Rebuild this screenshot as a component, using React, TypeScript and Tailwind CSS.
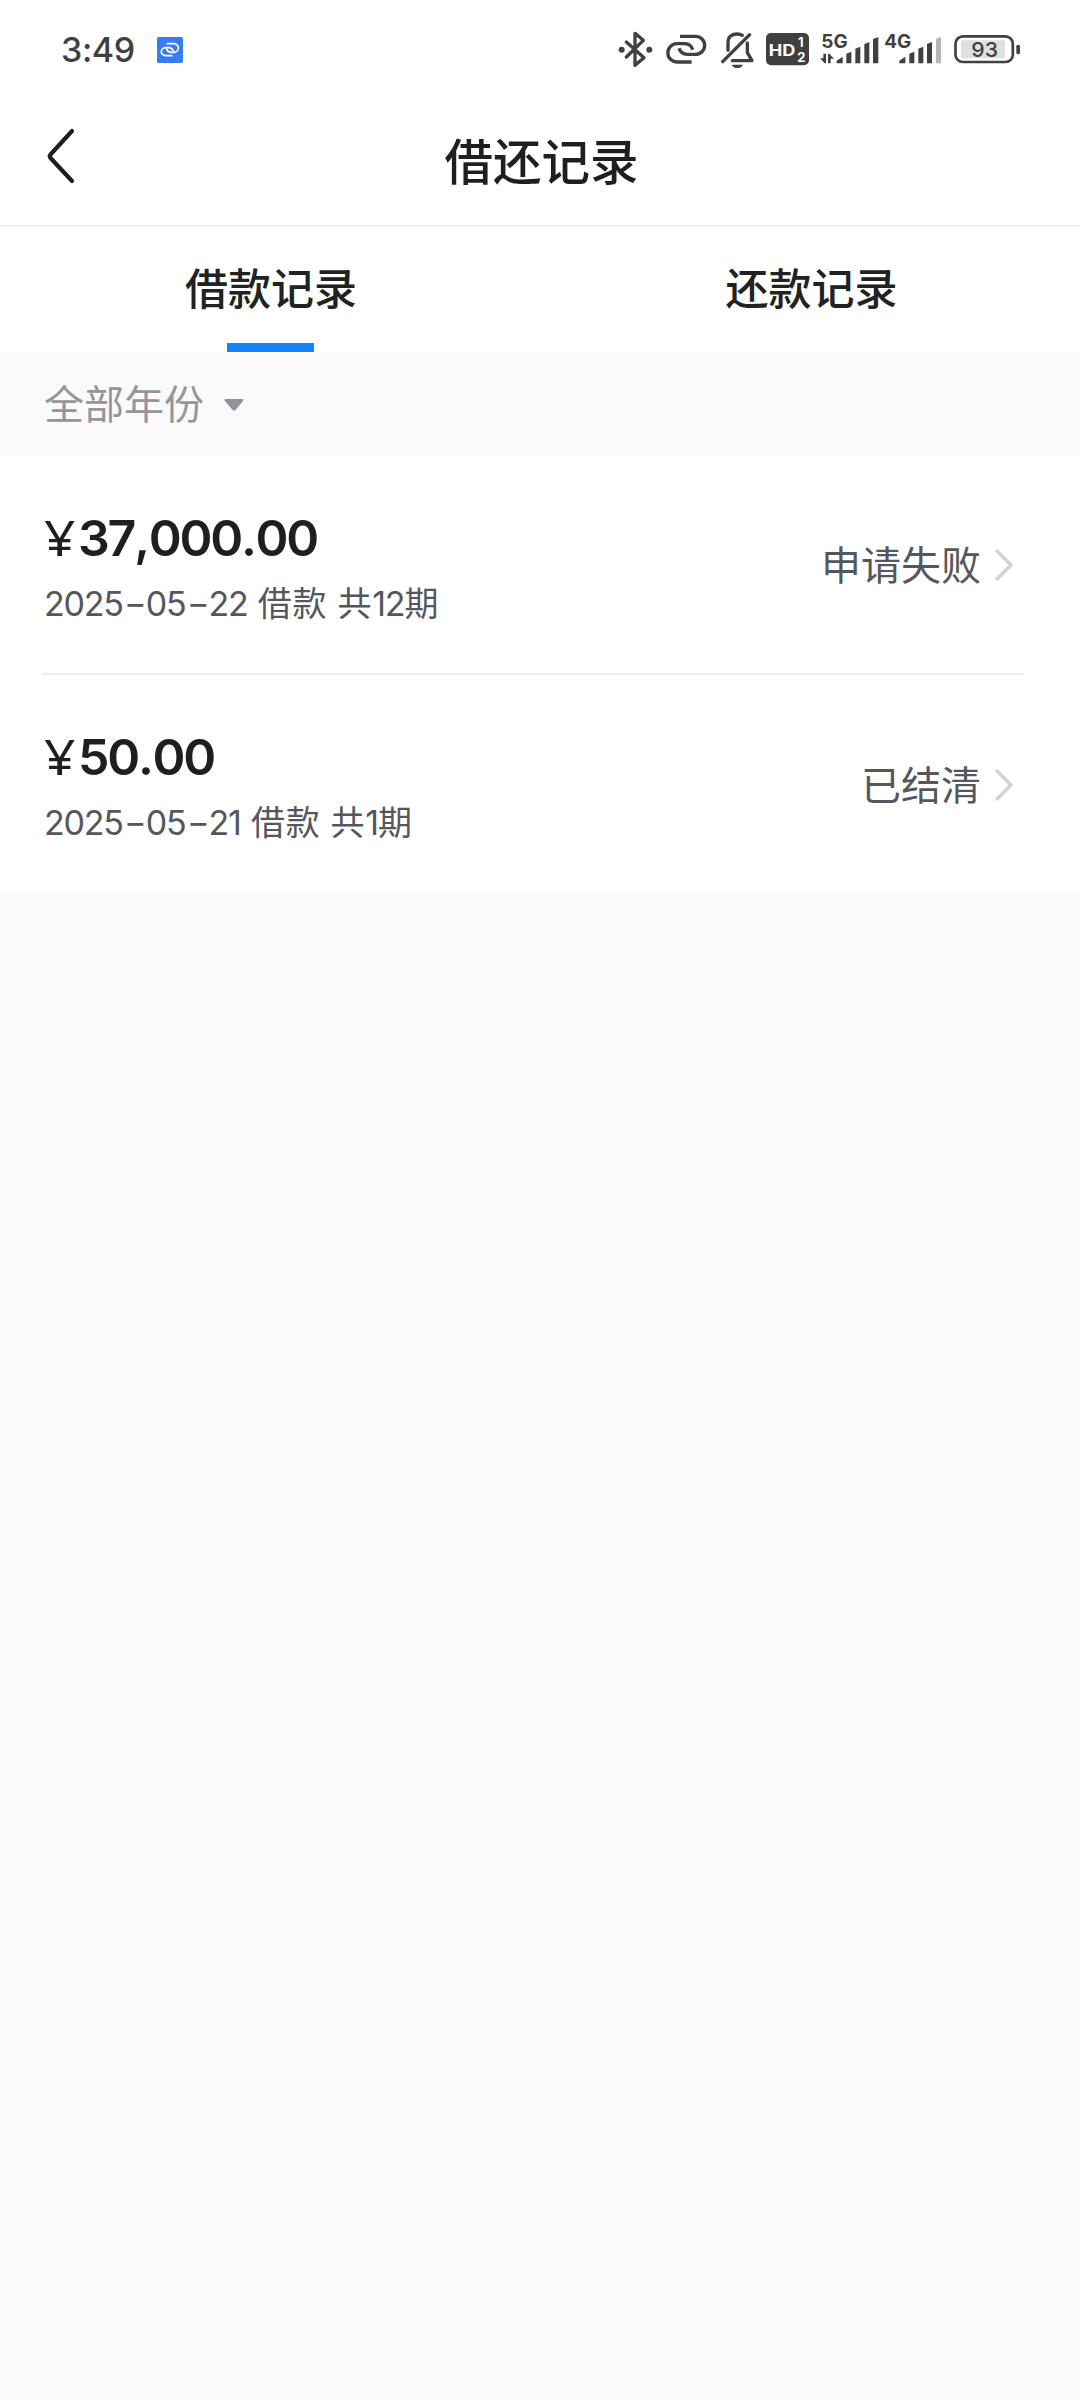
import React from 'react';

const records = [
  { amount: '37,000.00', date: '2025-05-22', type: '借款', periods: '12', status: '申请失败' },
  { amount: '50.00', date: '2025-05-21', type: '借款', periods: '1', status: '已结清' },
];

function StatusBar() {
  return (
    <div className="h-[97px] flex items-start pt-[29px] pl-[61px] pr-[59px] text-[#404040]">
      <div className="h-10 w-24 pt-0.5 flex items-center text-[34px] leading-10 font-medium tracking-[-0.4px]">3:49</div>
      <svg className="mt-2 w-[26px] h-[26px]" viewBox="0 0 78 78" fill="none">
        <rect width="78" height="78" rx="5" fill="#397cf1" />
        <g stroke="#fff" strokeWidth="5" strokeLinecap="round">
          <path d="M44 56H27A13 11 0 0 1 27 32H37Q46 33 48 42" />
          <path d="M31 20H50A13 12 0 0 1 50 46H42Q31 45 29 36" />
        </g>
      </svg>
      <div className="ml-auto flex h-10">
        {/* bluetooth */}
        <svg className="w-9 h-10" viewBox="51 27 108 120" fill="none" stroke="currentColor">
          <path d="M79 66L132 113L105 136V40L130 61L79 111" strokeWidth="10" strokeLinejoin="round" strokeLinecap="round" />
          <circle cx="65" cy="89" r="9" fill="currentColor" stroke="none" />
          <circle cx="148" cy="89" r="9" fill="currentColor" stroke="none" />
        </svg>
        {/* link */}
        <svg className="ml-3 w-[43px] h-10" viewBox="195 27 129 120" fill="none" stroke="currentColor" strokeWidth="10">
          <path d="M275 126H232A27 27 0 0 1 230 71H255Q273 72 278 89" />
          <path d="M240 49H287A27 27 0 0 1 287 103H262Q243 102 237 85" />
        </svg>
        {/* muted bell */}
        <svg className="ml-3 w-[35px] h-10" viewBox="360 27 105 120" fill="none" stroke="currentColor" strokeWidth="10" strokeLinecap="round" strokeLinejoin="round">
          <path d="M449 44L368 125" />
          <path d="M384 91V68C384 50 396 42 411 42Q421 42 427 46" />
          <path d="M442 69V98L456 122H397" />
          <path d="M395 134H429Q424 144 412 144Q400 144 395 134Z" fill="currentColor" stroke="none" />
        </svg>
        {/* HD */}
        <svg className="ml-[11px] w-[43px] h-10" viewBox="498 27 129 120">
          <rect x="498" y="39" width="129" height="97" rx="15" fill="currentColor" />
          <g fill="#fff" fontWeight="700">
            <text x="506" y="109" fontSize="48" textLength="80" lengthAdjust="spacingAndGlyphs">HD</text>
            <text x="594" y="82" fontSize="39">1</text>
            <text x="592" y="126" fontSize="39">2</text>
          </g>
        </svg>
        {/* 5G signal */}
        <svg className="ml-[9px] w-[62px] h-10" viewBox="24 27 186 120" fill="currentColor">
          <text x="34" y="83" fontSize="55" fontWeight="700" textLength="79" lengthAdjust="spacingAndGlyphs">5G</text>
          <path d="M40 101H48V130H44L30 115H40ZM54 130V101H58L72 116H62V130Z" />
          <path d="M80 130V122L98 110V130ZM109 130V101L124 95V130ZM136 130V86L151 80V130ZM163 130V72L178 66V130ZM189 130V57L205 51V130Z" />
        </svg>
        {/* 4G signal */}
        <svg className="ml-1 w-[58px] h-10" viewBox="222 27 174 120" fill="currentColor">
          <text x="223" y="83" fontSize="55" fontWeight="700" textLength="81" lengthAdjust="spacingAndGlyphs">4G</text>
          <path d="M268 130V122L286 110V130ZM298 130V101L313 95V130ZM325 130V86L340 80V130ZM351 130V72L366 66V130Z" />
          <path d="M378 130V57L393 51V130Z" fill="#b5b5b5" />
        </svg>
        {/* battery */}
        <svg className="ml-3 w-[67px] h-10" viewBox="432 27 201 120">
          <rect x="436.500" y="49" width="172" height="77" rx="22" fill="none" stroke="currentColor" strokeWidth="8" />
          <rect x="453" y="61" width="132" height="54" rx="4" fill="#dfdfdf" />
          <text x="484" y="112" fontSize="62" fontWeight="500" textLength="80" lengthAdjust="spacingAndGlyphs" fill="currentColor">93</text>
          <rect x="619" y="74" width="11" height="29" rx="5" fill="currentColor" />
        </svg>
      </div>
    </div>
  );
}

// Separators sit a little wider than the digits
function Amount({ value }: { value: string }) {
  return (
    <span className="font-semibold tracking-[-2.200px]">
      {value.split(/([.,])/).map((part, i) =>
        part === '.' || part === ',' ? (
          <span key={i} className="tracking-[-1.500px]">{part}</span>
        ) : (
          <span key={i}>{part}</span>
        )
      )}
    </span>
  );
}

// Long dashes between year, month and day
function DateText({ value }: { value: string }) {
  return (
    <>
      {value.split(/(-)/).map((part, i) =>
        part === '-' ? (
          <span key={i} className="inline-block w-[23px] text-center scale-x-[1.45]">-</span>
        ) : (
          <span key={i}>{part}</span>
        )
      )}
    </>
  );
}

export default function App() {
  return (
    <div className="w-[1080px] h-[2400px] bg-[#fafafa] overflow-hidden font-['Inter','Noto_Sans_CJK_SC',sans-serif]">
      <div className="bg-white">
        <StatusBar />
        <header className="h-[130px] border-b-2 border-[#f2f2f2] grid grid-cols-[1fr_auto_1fr] items-center text-[#1f1f1f]">
          <svg className="w-8 h-14 ml-[45px] -mt-2.5" viewBox="0 0 32 56" fill="none" stroke="currentColor" strokeWidth="4.200" strokeLinecap="round" strokeLinejoin="round">
            <path d="M27 3L5.500 26.500Q4 28 5.500 30L27 53" />
          </svg>
          <h1 className="pl-[3px] pt-1 text-[48.500px] leading-[60px] font-medium">借还记录</h1>
        </header>
        <nav className="h-[125px] grid grid-cols-2 text-[43px] font-medium text-[#222]">
          <div className="flex flex-col items-center justify-between">
            <span className="pt-[30px] pl-[2px] leading-[64px]">借款记录</span>
            <span className="w-[87px] h-[9px] bg-[#1283fb]" />
          </div>
          <div className="flex flex-col items-center">
            <span className="pt-[30px] pl-[3px] leading-[64px]">还款记录</span>
          </div>
        </nav>
      </div>

      <div className="h-[104px] flex items-center pl-11 text-[40px] text-[#94969b]">
        <span className="pt-0.5 leading-[60px]">全部年份</span>
        <svg className="ml-5 mt-0.5 w-5 h-3" viewBox="0 0 20 12" fill="#8f949b">
          <path d="M1 0H19Q20 1 19 2L11.500 11Q10 12.500 8.500 11L1 2Q0 1 1 0Z" />
        </svg>
      </div>

      <div className="bg-white pl-[42px] pr-14">
        {records.map((r) => (
          <div key={r.date} className="h-[218.500px] flex items-center justify-between border-b-2 border-[#ececee] last:border-b-0">
            <div className="pl-0.5 pt-2">
              <div className="flex items-baseline text-[50px] leading-[60px] text-[#1f1f1f]">
                <span className="w-[34px] text-[50px]"><span className="inline-block origin-left scale-x-110 font-['Noto_Sans',sans-serif]">¥</span></span>
                <Amount value={r.amount} />
              </div>
              <div className="mt-2.5 text-[34px] leading-[52px] tracking-[-1.200px] text-[#55575c]">
                <DateText value={r.date} />
                <span className="tracking-[0.700px]"> {r.type} 共</span>
                {r.periods}
                <span className="tracking-normal">期</span>
              </div>
            </div>
            <div className="flex items-center pr-2.5 pt-0.5">
              <span className="pt-0.5 text-[40px] leading-[60px] text-[#55575e]">{r.status}</span>
              <svg className="ml-[13px] w-5 h-9" viewBox="0 0 20 36" fill="none" stroke="#d3d3d5" strokeWidth="3.500">
                <path d="M2 3L17 18L2 33" />
              </svg>
            </div>
          </div>
        ))}
      </div>
    </div>
  );
}
